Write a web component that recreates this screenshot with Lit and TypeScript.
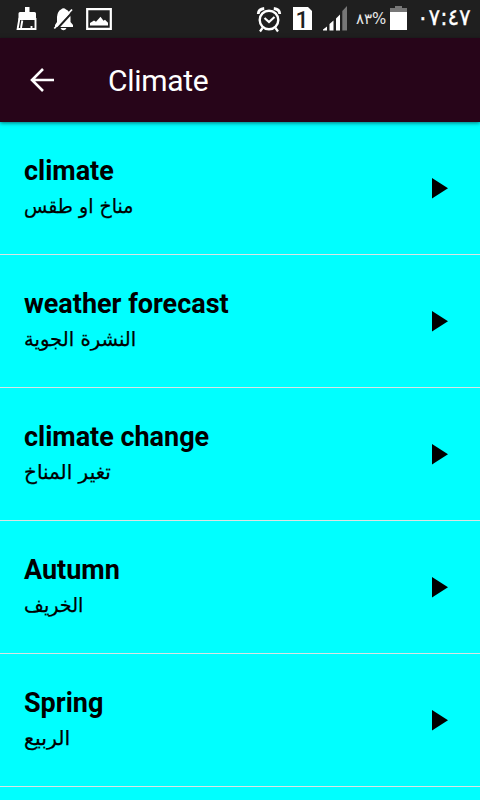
import { LitElement, html, css } from "lit";
import { customElement } from "lit/decorators.js";
import { styleMap } from "lit/directives/style-map.js";

// stretch: horizontal scale of the translation line
const WORDS = [
  { en: "climate", ar: "مناخ او طقس", stretch: 0.95 },
  { en: "weather forecast", ar: "النشرة الجوية", stretch: 0.98 },
  { en: "climate change", ar: "تغير المناخ", stretch: 1 },
  { en: "Autumn", ar: "الخريف", stretch: 0.96 },
  { en: "Spring", ar: "الربيع", stretch: 1.03 },
];

@customElement("status-bar")
class StatusBar extends LitElement {
  static styles = css`
    :host { display: flex; height: 38px; background: #1f1f1f; color: #fff; overflow: hidden; justify-content: space-between; }
    .group { display: flex; align-items: flex-start; }
    svg { display: block; flex: none; }
    .sim { font: 500 23px Roboto, sans-serif; fill: #1f1f1f; }
    .text { direction: ltr; unicode-bidi: bidi-override; white-space: nowrap; flex: none; font-family: "DejaVu Sans", sans-serif; }
    .battery { font-size: 15px; line-height: 39px; width: 34px; margin-left: 7px; letter-spacing: -0.8px; color: #e8e8e8; }
    .clock { font-size: 23px; line-height: 34px; width: 55px; margin: 0 8px 0 10px; letter-spacing: -0.3px; -webkit-text-stroke: 0.3px #fff; transform: scaleX(0.94); transform-origin: left; }
  `;
  render() {
    return html`
      <div class="group">
        <svg width="120" height="38" viewBox="0 0 120 38" fill="none">
          <path d="M25 7h4.500v5h5q1.500 0 1.500 1.500V20H18.500v-6.500q0-1.500 1.500-1.500h5z" fill="#fff" />
          <path d="M19.500 18L17.600 29h17.900V18M22.300 20.500l-1.300 7.500M31.500 26v2" stroke="#fff" stroke-width="1.900" />
          <path d="M61 9.500q2.500-2.500 5 0 4 1.500 4.500 7.500v5l2.500 3v2H55v-2l2-3v-5q.500-6 4-7.500M60.500 28h6q-1 2.300-3 2.300t-3-2.300" fill="#fff" />
          <path d="M56 30L73.500 11" stroke="#1f1f1f" stroke-width="2" />
          <path d="M54.300 28.500L72 9.500" stroke="#fff" stroke-width="1.800" />
          <path d="M87.200 9.200h23.600v19.600H87.200z" stroke="#fff" stroke-width="2.200" />
          <path d="M90 25.500V23l4-2.500 2 1.200 4.500-5 3 4 1.500-1 3 3v2.800z" fill="#fff" />
        </svg>
      </div>
      <div class="group">
        <svg width="99" height="38" viewBox="250 0 99 38" fill="none">
          <circle cx="269" cy="20" r="9.300" stroke="#fff" stroke-width="2.400" />
          <path d="M258.200 14q.3-5 6-5.500M279.800 14q-.3-5-6-5.500" stroke="#fff" stroke-width="2.800" />
          <path d="M262.500 28l-2.500 3.500M275.500 28l2.500 3.500" stroke="#fff" stroke-width="2.200" />
          <path d="M264.500 18l4.500 4 5.500-5" stroke="#fff" stroke-width="2.200" />
          <path d="M293 7h15l4 4v19h-19z" fill="#fff" />
          <text class="sim" x="295.500" y="27.500">1</text>
          <path d="M323 30.500v-1l4-3v4zM329.500 30.500v-6.500l4-3.500v10zM336 30.500v-12l4-4v16z" fill="#fff" />
          <path d="M342.300 30.500V11l4.700-5v24.500z" fill="#777" />
        </svg>
        <span class="text battery">٨٣%</span>
        <svg width="17" height="38" viewBox="0 0 17 38">
          <path d="M5 6h7v2h5v4H0V8h5z" fill="#777" />
          <path d="M0 12h17v18H0z" fill="#fff" />
        </svg>
        <span class="text clock">٠٧:٤٧</span>
      </div>
    `;
  }
}

@customElement("word-row")
class WordRow extends LitElement {
  static properties = { en: {}, ar: {}, stretch: { type: Number } };
  declare en: string;
  declare ar: string;
  declare stretch: number;
  static styles = css`
    :host { display: flex; box-sizing: border-box; height: 133px; padding: 0 32px 0 24px; border-bottom: 1px solid #d8e4e4; align-items: center; justify-content: space-between; color: #000; }
    .words { display: flex; flex-direction: column; align-items: flex-start; }
    .en { font: 700 27px/36px Roboto, sans-serif; letter-spacing: -0.02px; }
    .ar { font: 20px/34px "DejaVu Sans", sans-serif; direction: rtl; white-space: nowrap; transform-origin: left; -webkit-text-stroke: 0.25px #000; }
    svg { display: block; }
  `;
  render() {
    return html`
      <div class="words">
        <div class="en">${this.en}</div>
        <div class="ar" style=${styleMap({ transform: `scaleX(${this.stretch})` })}>${this.ar}</div>
      </div>
      <svg width="16" height="21" viewBox="0 0 16 21"><path d="M0 0l16 10.200L0 20.500z" /></svg>
    `;
  }
}

@customElement("app-root")
class AppRoot extends LitElement {
  static styles = css`
    :host { display: block; width: 480px; height: 800px; overflow: hidden; background: #0ff; }
    .bar { display: flex; align-items: center; height: 84px; background: #270519; color: #fff; box-shadow: 0 1px 4px rgba(0, 0, 0, 0.55); position: relative; }
    .back { display: block; margin-left: 30px; }
    .title { font: 400 30px/40px Roboto, sans-serif; margin: 2px 0 0 54px; letter-spacing: -0.3px; }
  `;
  render() {
    return html`
      <status-bar></status-bar>
      <div class="bar">
        <svg class="back" width="24" height="24" viewBox="0 0 24 24" fill="none" stroke="#fff" stroke-width="2.600"><path d="M24 12H2M13 1L2 12l11 11" /></svg>
        <div class="title">Climate</div>
      </div>
      ${WORDS.map((w) => html`<word-row .en=${w.en} .ar=${w.ar} .stretch=${w.stretch}></word-row>`)}
    `;
  }
}
